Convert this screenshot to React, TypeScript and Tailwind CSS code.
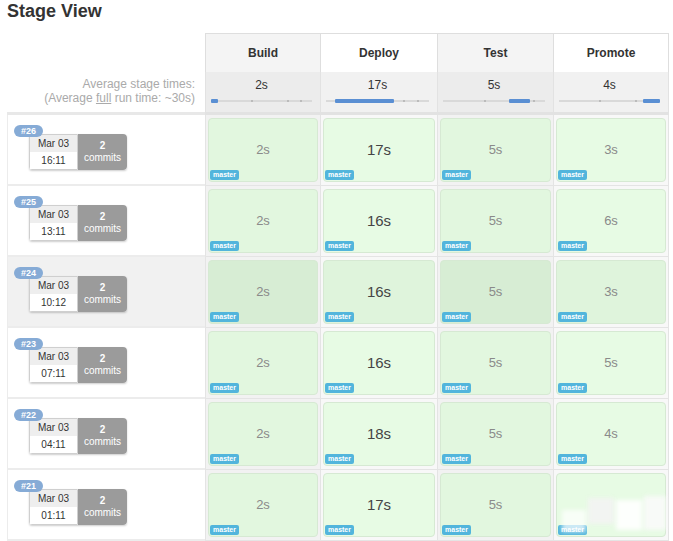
import React from 'react';

interface Run {
  id: number;
  date: string;
  time: string;
  stages: string[];
  selected?: boolean;
}

const stages = ['Build', 'Deploy', 'Test', 'Promote'];
const averages = ['2s', '17s', '5s', '4s'];
// left/width of the blue segment on each average bar, in %
const bars = [
  { left: 0, width: 7 },
  { left: 9, width: 57 },
  { left: 65, width: 20 },
  { left: 83, width: 17 },
];

const runs: Run[] = [
  { id: 26, date: 'Mar 03', time: '16:11', stages: ['2s', '17s', '5s', '3s'] },
  { id: 25, date: 'Mar 03', time: '13:11', stages: ['2s', '16s', '5s', '6s'] },
  { id: 24, date: 'Mar 03', time: '10:12', stages: ['2s', '16s', '5s', '3s'], selected: true },
  { id: 23, date: 'Mar 03', time: '07:11', stages: ['2s', '16s', '5s', '5s'] },
  { id: 22, date: 'Mar 03', time: '04:11', stages: ['2s', '18s', '5s', '4s'] },
  { id: 21, date: 'Mar 03', time: '01:11', stages: ['2s', '17s', '5s', ''] },
];

const headBg = ['bg-[#f4f4f4]', 'bg-white', 'bg-[#f4f4f4]', 'bg-white'];
const avgBg = ['bg-[#ececec]', 'bg-[#f1f1f1]', 'bg-[#ececec]', 'bg-[#f1f1f1]'];
const colBg = ['bg-[#f2f2f2]', 'bg-[#f8f8f8]', 'bg-[#f2f2f2]', 'bg-[#f8f8f8]'];
const cellBg = ['bg-[#e2f7df]', 'bg-[#e7fbe4]', 'bg-[#e2f7df]', 'bg-[#e7fbe4]'];
const cellBgSel = ['bg-[#d7edd4]', 'bg-[#dff4dc]', 'bg-[#d7edd4]', 'bg-[#dff4dc]'];

const RunInfo: React.FC<{ run: Run }> = ({ run }) => (
  <div className="flex flex-col items-start pl-[6px] pt-[10px]">
    <span className="relative z-10 h-[12px] w-[29px] rounded-full bg-[#86abd6] text-center text-[9px] font-bold leading-[12px] text-white">
      #{run.id}
    </span>
    <div className="ml-[15px] mt-[-3px] flex h-[36px] shadow-[0_1px_2px_rgba(0,0,0,0.2)] rounded-[3px]">
      <div className="flex w-[49px] flex-col border border-[#cfcfcf] rounded-l-[3px] text-[10px] text-[#333]">
        <div className="flex h-[17px] items-center justify-center bg-[#eeeeee]">{run.date}</div>
        <div className="flex flex-1 items-center justify-center bg-white">{run.time}</div>
      </div>
      <div className="flex w-[49px] flex-col items-center justify-center rounded-r-[4px] bg-[#9b9b9b] text-[10px] leading-[12px] text-white">
        <span className="font-bold">2</span>
        <span>commits</span>
      </div>
    </div>
  </div>
);

const StageCell: React.FC<{ value: string; col: number; selected?: boolean }> = ({ value, col, selected }) => {
  const long = col === 1;
  return (
    <div
      className={`${colBg[col]} h-[71px] px-[2px] pt-[3px] pb-[3px] border-l border-b border-[#e4e4e4] ${
        col === 3 ? 'border-r' : ''
      }`}
    >
      <div
        className={`relative flex h-full items-center justify-center rounded-[4px] border border-[#d6e9d3] ${
          selected ? cellBgSel[col] : cellBg[col]
        }`}
      >
        <span className={long ? 'text-[15px] text-[#444]' : 'text-[13px] text-[#8a8a8a]'}>{value}</span>
        <span className="absolute bottom-[1px] left-[1px] h-[10px] w-[29px] rounded-[2px] bg-[#52b5dc] text-center text-[7px] font-bold leading-[10px] text-white">
          master
        </span>
      </div>
    </div>
  );
};

export default function App() {
  return (
    <div className="relative h-[541px] w-[673px] overflow-hidden bg-white font-['Liberation_Sans',Arial,sans-serif]">
      <h2 className="pl-[7px] pt-[1px] text-[18px] font-bold leading-[20px] text-[#333]">Stage View</h2>

      <div className="mt-[12px] ml-[7px] grid grid-cols-[198px_115px_117px_116px_116px]">
        {/* header names */}
        <div />
        {stages.map((s, i) => (
          <div
            key={s}
            className={`${headBg[i]} flex h-[39px] items-center justify-center border-t border-l border-[#dedede] text-[12px] font-bold text-[#333] ${
              i === 3 ? 'border-r' : ''
            }`}
          >
            {s}
          </div>
        ))}

        {/* averages */}
        <div className="flex h-[43px] flex-col items-end justify-center pr-[10px] pb-[2px] text-[12px] leading-[14px] text-[#aaa] border-b-[3px] border-[#e8e8e8]">
          <span>Average stage times:</span>
          <span>
            (Average <span className="underline">full</span> run time: ~30s)
          </span>
        </div>
        {averages.map((a, i) => (
          <div
            key={i}
            className={`${avgBg[i]} flex h-[43px] flex-col border-l border-b-[3px] border-[#e2e2e2] pl-[5px] pr-[8px] pt-[6px] ${
              i === 3 ? 'border-r' : ''
            }`}
          >
            <span className="text-center text-[12px] leading-[14px] text-[#333]">{a}</span>
            <div className="relative mt-[8px] h-[2px] bg-[#d9d9d9]">
              <span className="absolute left-[40%] top-0 h-[2px] w-[2px] bg-[#bbb]" />
              <span className="absolute left-[75%] top-0 h-[2px] w-[2px] bg-[#bbb]" />
              <span className="absolute left-[88%] top-0 h-[2px] w-[2px] bg-[#bbb]" />
              <span
                className="absolute top-[-1px] h-[4px] rounded-[1px] bg-[#5a8fd3]"
                style={{ left: `${bars[i].left}%`, width: `${bars[i].width}%` }}
              />
            </div>
          </div>
        ))}

        {/* runs */}
        {runs.map((run) => (
          <React.Fragment key={run.id}>
            <div
              className={`h-[71px] border-l border-b-2 border-[#ececec] ${run.selected ? 'bg-[#f1f1f1]' : 'bg-white'}`}
            >
              <RunInfo run={run} />
            </div>
            {run.stages.map((v, i) => (
              <StageCell key={i} value={v} col={i} selected={run.selected} />
            ))}
          </React.Fragment>
        ))}
      </div>

      {/* blurred watermark patches at bottom right */}
      <div className="pointer-events-none absolute left-[562px] top-[494px] flex gap-[2px] blur-[2px]">
        <div className="mt-[16px] h-[22px] w-[24px] bg-white/70" />
        <div className="mt-[4px] h-[26px] w-[26px] bg-[#f3f3f3]/90" />
        <div className="mt-[6px] h-[30px] w-[26px] bg-white/90" />
        <div className="mt-[2px] h-[34px] w-[22px] bg-[#fafafa]/90" />
      </div>
    </div>
  );
}
